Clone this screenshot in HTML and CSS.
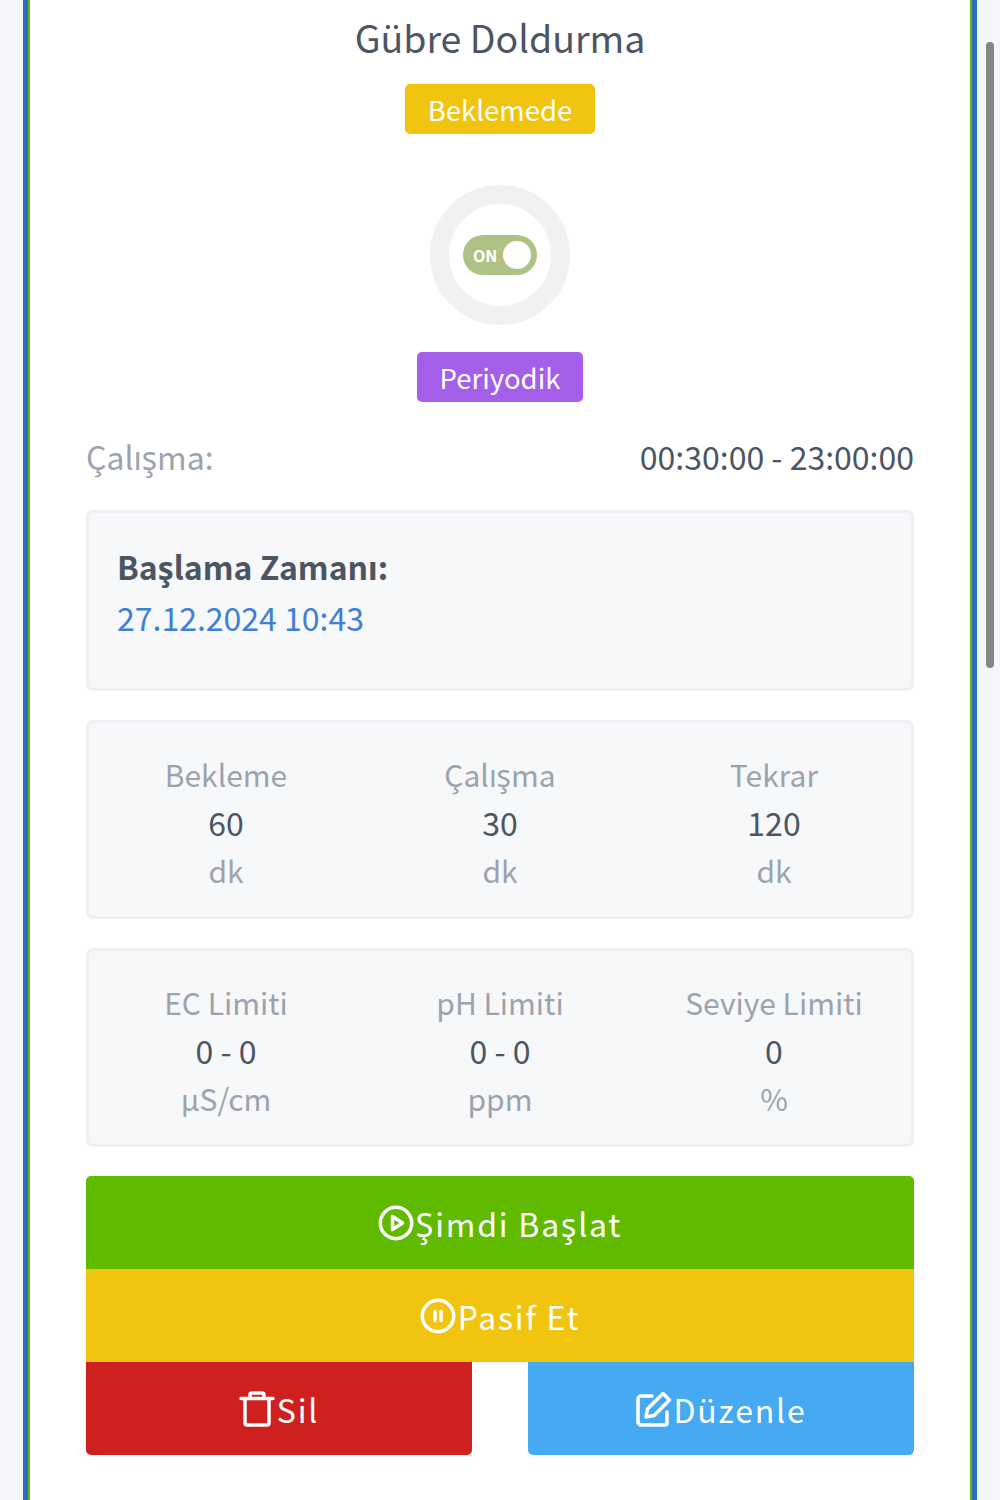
FILE: index.html
```html
<!DOCTYPE html>
<html lang="tr">
<head>
<meta charset="utf-8">
<title>Gübre Doldurma</title>
<link rel="stylesheet" href="styles.css">
</head>
<body>
<div class="outer">
  <main class="card">
    <h1 class="title">Gübre Doldurma</h1>
    <span class="badge badge-wait">Beklemede</span>
    <div class="ring">
      <div class="switch"><span class="switch-label">ON</span><span class="knob"></span></div>
    </div>
    <span class="badge badge-period">Periyodik</span>
    <div class="work-row"><span class="muted">Çalışma:</span><span class="work-time">00:30:00 - 23:00:00</span></div>
    <section class="panel start-panel">
      <div class="start-label">Başlama Zamanı:</div>
      <div class="start-value">27.12.2024 10:43</div>
    </section>
    <section class="panel stats">
      <div class="stat"><div class="muted">Bekleme</div><div class="value">60</div><div class="muted">dk</div></div>
      <div class="stat"><div class="muted">Çalışma</div><div class="value">30</div><div class="muted">dk</div></div>
      <div class="stat"><div class="muted">Tekrar</div><div class="value">120</div><div class="muted">dk</div></div>
    </section>
    <section class="panel stats">
      <div class="stat"><div class="muted">EC Limiti</div><div class="value">0 - 0</div><div class="muted">µS/cm</div></div>
      <div class="stat"><div class="muted">pH Limiti</div><div class="value">0 - 0</div><div class="muted">ppm</div></div>
      <div class="stat"><div class="muted">Seviye Limiti</div><div class="value">0</div><div class="muted">%</div></div>
    </section>
    <div class="actions">
      <button class="btn btn-green">
        <svg class="icon" viewBox="0 0 36 36"><circle cx="18" cy="18" r="15.7"/><path d="M14.5 11.5 24.5 18l-10 6.500z"/></svg>Şimdi Başlat
      </button>
      <button class="btn btn-yellow">
        <svg class="icon" viewBox="0 0 36 36"><circle cx="18" cy="18" r="15.7"/><path d="M15 13.500v9M21 13.500v9"/></svg>Pasif Et
      </button>
      <div class="btn-row">
        <button class="btn btn-red">
          <svg class="icon" viewBox="0 0 36 36"><path d="M2 7.500h32M6 7.500v24.500a2 2 0 0 0 2 2h20a2 2 0 0 0 2-2V7.500M11 7.500V4a2 2 0 0 1 2-2h10a2 2 0 0 1 2 2v3.500"/></svg>Sil
        </button>
        <button class="btn btn-blue">
          <svg class="icon" viewBox="0 0 36 36"><path d="M16 5H5a3 3 0 0 0-3 3v23a3 3 0 0 0 3 3h24a2 2 0 0 0 2-2V21"/><path d="M27 2.500 33.500 9 18 24.500l-8 1.500 1.500-8z"/></svg>Düzenle
        </button>
      </div>
    </div>
  </main>
</div>
<div class="scrollbar"></div>
</body>
</html>
```
FILE: styles.css
```css
* { box-sizing: border-box; }
html, body { margin: 0; height: 1500px; overflow: hidden; }
body {
  background: #f4f6fb;
  font-family: "Noto Sans CJK JP", "Noto Sans", sans-serif;
  color: #4b5563;
}
.outer {
  margin: 0 23px;
  width: 954px;
  height: 1500px;
  border-left: 5px solid #2b6cc4;
  border-right: 5px solid #2b6cc4;
}
.card {
  height: 100%;
  background: #fff;
  border-left: 2px solid #62bb00;
  border-right: 2px solid #62bb00;
  padding: 0 56px;
  display: flex;
  flex-direction: column;
  align-items: center;
}
.title {
  margin: 14px 0 0;
  height: 46px;
  font-size: 37.500px;
  line-height: 46px;
  font-weight: 400;
  color: #4b5563;
}
.badge {
  display: flex;
  align-items: center;
  justify-content: center;
  height: 50px;
  padding: 0 23px;
  border-radius: 5px;
  color: #fff;
  font-size: 27.500px;
}
.badge-wait { margin-top: 24px; background: #f1c40f; }
.badge-period { background: #a55eea; }
.ring {
  margin: 51px 0 27px;
  width: 140px;
  height: 140px;
  border: 19px solid #f1f1f1;
  border-radius: 50%;
  display: flex;
  align-items: center;
  justify-content: center;
}
.switch {
  width: 74px;
  height: 40px;
  border-radius: 20px;
  background: #afc285;
  display: flex;
  align-items: center;
  justify-content: space-between;
  padding: 0 6px 0 10px;
}
.switch-label { color: #fff; font-size: 16px; font-weight: 700; }
.knob { width: 28px; height: 28px; border-radius: 50%; background: #fff; }
.muted { color: #9ca3af; }
.work-row {
  width: 100%;
  margin-top: 33px;
  height: 42px;
  display: flex;
  justify-content: space-between;
  align-items: center;
  font-size: 32px;
}
.work-time { color: #4b5563; }
.panel {
  width: 100%;
  background: #f7f8fa;
  border: 3px solid #eef0f3;
  border-radius: 7px;
}
.start-panel {
  margin-top: 33px;
  height: 181px;
  padding: 28px 28px;
  font-size: 32px;
  line-height: 51px;
}
.start-label { font-weight: 700; color: #4b5563; }
.start-value { color: #3f7fd6; }
.stats {
  margin-top: 29px;
  height: 199px;
  display: grid;
  grid-template-columns: repeat(3, 1fr);
  padding: 27px 0 0;
  font-size: 30px;
  line-height: 48px;
  text-align: center;
}
.value { color: #4b5563; font-size: 32px; }
.actions { width: 100%; margin-top: 29px; display: flex; flex-direction: column; }
.btn {
  width: 100%;
  height: 93px;
  border: 0;
  color: #fff;
  font-family: inherit;
  font-size: 32px;
  letter-spacing: 1.800px;
  display: flex;
  align-items: center;
  justify-content: center;
  padding: 0;
}
.btn-green { background: #60bb00; border-radius: 5px 5px 0 0; }
.btn-yellow { background: #f1c40f; }
.btn-row { display: flex; justify-content: space-between; }
.btn-red { width: 386px; background: #cd201f; border-radius: 0 0 0 5px; }
.btn-blue { width: 386px; background: #45aaf2; border-radius: 0 0 5px 0; }
.btn-red { border-bottom-right-radius: 5px; }
.btn-blue { border-bottom-left-radius: 5px; }
.icon {
  width: 36px;
  height: 36px;
  margin-right: 2px;
  fill: none;
  stroke: #fff;
  stroke-width: 3.500;
  stroke-linecap: round;
  stroke-linejoin: round;
}
.scrollbar {
  position: fixed;
  left: 986px;
  top: 42px;
  width: 8px;
  height: 626px;
  border-radius: 4px;
  background: #868686;
}
```
